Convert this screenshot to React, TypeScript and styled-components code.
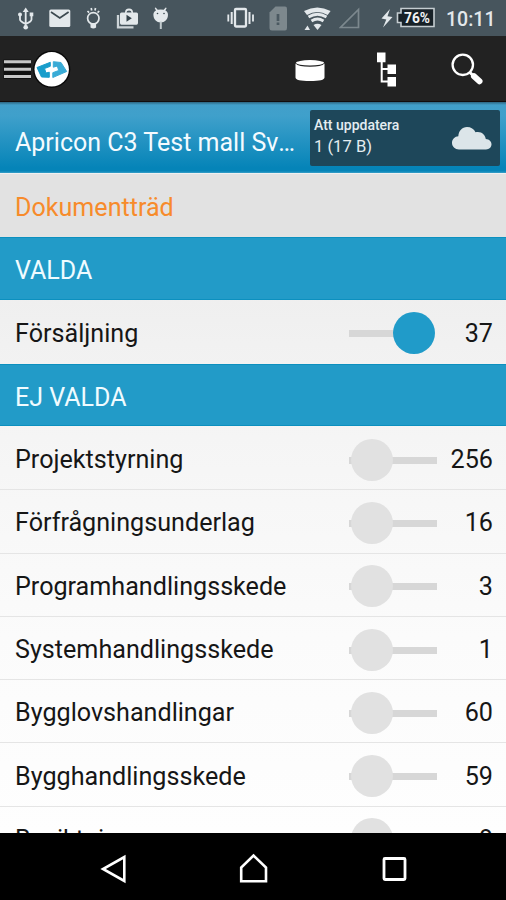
import React from "react";
import styled, { createGlobalStyle } from "styled-components";

const GlobalStyle = createGlobalStyle`
  html, body { margin: 0; padding: 0; background: #000; }
  * { box-sizing: border-box; }
  svg { display: block; flex: none; }
`;

const Screen = styled.div`
  width: 506px;
  height: 900px;
  overflow: hidden;
  display: flex;
  flex-direction: column;
  background: #000;
  font-family: Roboto, "Liberation Sans", sans-serif;
`;

const StatusBar = styled.header`
  height: 36px;
  flex: none;
  display: flex;
  background: #47555d;
`;

const StatusIcon = styled.svg<{ $gap: number }>`
  height: 36px;
  margin-left: ${(p) => p.$gap}px;
`;

const Clock = styled.time`
  margin-left: 10px;
  padding-top: 2px;
  font-size: 19.5px;
  font-weight: 500;
  line-height: 36px;
  color: #e3e8eb;
  white-space: nowrap;
`;

const Toolbar = styled.nav`
  height: 66px;
  flex: none;
  display: flex;
  background: #222;
  border-bottom: 1px solid #120d0e;
`;

const ToolButton = styled.button<{ $gap: number }>`
  margin: 0 0 0 ${(p) => p.$gap}px;
  padding: 0;
  border: 0;
  background: none;
`;

const TitleBar = styled.section`
  height: 71px;
  flex: none;
  display: flex;
  justify-content: space-between;
  padding: 8px 6px 7px 15px;
  background: linear-gradient(#2d6580 0, #429fca 3px, #3fa0cb 14px, #0584b8 66px, #0584b8 69px, #3a9fc8 71px);
`;

const Title = styled.h1`
  margin: 0;
  padding-top: 8px;
  width: 284px;
  font-size: 25px;
  font-weight: 400;
  line-height: 50px;
  color: #f4fbff;
  overflow: hidden;
  text-overflow: ellipsis;
  white-space: nowrap;
`;

const UpdateBox = styled.div`
  width: 190px;
  height: 56px;
  display: flex;
  justify-content: space-between;
  padding: 5px 8px 0 4px;
  border-radius: 2px;
  background: #1e475a;
  color: #e4edf1;
`;

const UpdateLabel = styled.div`
  font-size: 14px;
  font-weight: 500;
  line-height: 20px;
  white-space: nowrap;
`;

const UpdateSize = styled.div`
  font-size: 16.6px;
  line-height: 23px;
  white-space: nowrap;
`;

const TreeHeading = styled.h2`
  margin: 0;
  height: 64px;
  flex: none;
  padding: 3px 15px 0;
  border-top: 1px solid #f0f0f0;
  background: #e2e2e2;
  font-size: 25.1px;
  font-weight: 400;
  line-height: 61px;
  color: #f78b2b;
`;

const List = styled.main`
  height: 596px;
  flex: none;
  overflow: hidden;
  background: linear-gradient(#efefef 60px, #f5f5f5 200px, #fbfbfb 400px, #fefefe 596px);
`;

const GroupHeading = styled.h3`
  margin: 0;
  height: 62.5px;
  padding: 3px 15px 0;
  border-top: 1px solid #0c90bf;
  border-bottom: 1px solid #0c90bf;
  background: #229bc8;
  font-size: 25px;
  font-weight: 400;
  line-height: 59px;
  color: #f0fbff;
`;

const Row = styled.div<{ $divided?: boolean }>`
  height: ${(p) => (p.$divided ? 63.3 : 64)}px;
  display: grid;
  grid-template-columns: 334px 88px 1fr;
  align-items: center;
  padding: ${(p) => (p.$divided ? 4 : 3)}px 13px 0 15px;
  box-shadow: ${(p) => (p.$divided ? "0 1px 0 #e5e5e5" : "none")};
  font-size: 25.15px;
  line-height: 30px;
  color: #161616;
`;

const Label = styled.span`
  padding-top: 1px;
`;

const Count = styled(Label)`
  text-align: right;
`;

const Switch = styled.span<{ $on?: boolean }>`
  height: 42px;
  display: flex;
  align-items: center;
  justify-content: ${(p) => (p.$on ? "flex-end" : "flex-start")};
  padding: 0 ${(p) => (p.$on ? "2px" : "0")} 0 ${(p) => (p.$on ? "0" : "2px")};
  background: linear-gradient(#d7d7d7, #d7d7d7) left 18px / ${(p) => (p.$on ? 70 : 88)}px 7px no-repeat;
`;

const Knob = styled.span<{ $on?: boolean }>`
  width: 42px;
  height: 42px;
  border-radius: 50%;
  background: ${(p) => (p.$on ? "#209bc9" : "#e1e1e1")};
`;

const NavBar = styled.footer`
  height: 67px;
  flex: none;
  display: flex;
  background: #000;
`;

type Item = { name: string; count: number };

const available: Item[] = [
  { name: "Projektstyrning", count: 256 },
  { name: "Förfrågningsunderlag", count: 16 },
  { name: "Programhandlingsskede", count: 3 },
  { name: "Systemhandlingsskede", count: 1 },
  { name: "Bygglovshandlingar", count: 60 },
  { name: "Bygghandlingsskede", count: 59 },
  { name: "Besiktning", count: 8 },
];

function DocumentRow({ name, count, on }: Item & { on?: boolean }) {
  return (
    <Row $divided={!on}>
      <Label>{name}</Label>
      <Switch $on={on}>
        <Knob $on={on} />
      </Switch>
      <Count>{count}</Count>
    </Row>
  );
}

function Status() {
  const light = "#e3e8eb";
  return (
    <StatusBar>
      <StatusIcon $gap={17} width="18" viewBox="17 0 18 36" fill="none" stroke={light} strokeWidth="1.8">
        <path d="M25.7 11V27M20 15v4.5q0 2 5.700 4.500M31.500 15v4.500q0 2-5.800 4.500" />
        <path d="M25.700 7.500l3 4.500h-6z" fill={light} stroke="none" />
        <circle cx="25.700" cy="27.300" r="2.300" fill={light} stroke="none" />
        <circle cx="20" cy="14.500" r="2" fill={light} stroke="none" />
        <path d="M29.700 12.500h3.600v3.800h-3.600z" fill={light} stroke="none" />
      </StatusIcon>
      <StatusIcon $gap={14} width="22" viewBox="49 0 22 36">
        <rect x="49.300" y="9.500" width="21" height="17.500" rx="1.600" fill={light} />
        <path d="M51 12l8.800 6 8.800-6" fill="none" stroke="#3c4950" strokeWidth="1.700" />
      </StatusIcon>
      <StatusIcon $gap={14} width="17" viewBox="85 0 17 36" fill="none" stroke={light} strokeWidth="1.700">
        <circle cx="93.300" cy="18.300" r="5.700" />
        <path d="M87.500 11l1.600 1.700M99.200 11l-1.600 1.700M91.200 8l.5 2.500M95.500 8l-.5 2.500" />
        <path d="M90.500 23v4.500q2.800 2 5.600 0V23z" fill={light} stroke="none" />
      </StatusIcon>
      <StatusIcon $gap={14} width="23" viewBox="116 0 23 36">
        <path d="M118 15v12.400h15.500" fill="none" stroke="#cdd4d8" strokeWidth="2.300" />
        <path d="M121.500 12.500h3.500q0-4 4-4t4 4h3.500q1.500 0 1.500 1.500v9q0 1.700-1.500 1.700h-15q-1.500 0-1.500-1.700v-9q0-1.500 1.500-1.500zM126.500 12.500h5q0-2-2.500-2t-2.500 2z" fill={light} />
        <path d="M126.500 14.800v7l5.300-3.500z" fill="#35434b" />
      </StatusIcon>
      <StatusIcon $gap={13} width="18" viewBox="152 0 18 36">
        <path d="M153.500 16c-.6-3 .8-4.700 2.500-5.500L154.700 8l1-.5 2 2.300q3-.8 6 0l2-2.300 1 .5-1.300 2.500c1.700.8 3 2.500 2.500 5.500-.4 3.500-3 6.500-7.200 6.500s-6.800-3-7.200-6.500z" fill={light} />
        <path d="M159.800 21.500h2v7.500h-2z" fill="#c1cace" />
        <circle cx="157.500" cy="13.500" r=".8" fill="#3b4950" />
        <circle cx="164" cy="13.500" r=".8" fill="#3b4950" />
      </StatusIcon>
      <StatusIcon $gap={56} width="29" viewBox="226 0 29 36" fill="none" stroke={light}>
        <rect x="235" y="9" width="11" height="17.500" rx="1" strokeWidth="2.300" />
        <path d="M231.700 12v12M249.500 12v12" strokeWidth="2" />
        <path d="M228.300 14.500v7M253 14.500v7" strokeWidth="1.800" />
      </StatusIcon>
      <StatusIcon $gap={14} width="19" viewBox="269 0 19 36">
        <path d="M275.500 6.500H285q2 0 2 2V28q0 2.500-2 2.500h-13q-2.500 0-2.500-2.500V12.500z" fill="#7d888d" />
        <path d="M278 14v7M278 22.500V25" stroke="#4b5961" strokeWidth="2.700" />
      </StatusIcon>
      <StatusIcon $gap={15} width="29" viewBox="303 0 29 36" fill="none" stroke={light}>
        <path d="M304 11q13.300-7 26.600 0l-3 4q-10.300-6-20.600 0z" fill={light} stroke="none" />
        <path d="M308.500 17q9-5.500 18 0M311.500 21q6-4 12 0" strokeWidth="2.800" />
        <path d="M313.500 25q4-2.500 8 0l-4 5z" fill={light} stroke="none" />
        <path d="M304.500 30l3-4.500 2.500 4.500z" fill={light} stroke="none" />
      </StatusIcon>
      <StatusIcon $gap={7} width="21" viewBox="339 0 21 36">
        <path d="M358.500 9.500V27.500H340.500z" fill="none" stroke="#7c888e" strokeWidth="1.700" />
      </StatusIcon>
      <StatusIcon $gap={21} width="55" viewBox="381 0 55 36">
        <path d="M390 9l-8.500 9.500 4.800 1L383 27.500l9.500-10.500-5-.8z" fill={light} />
        <path d="M401 8.500H434V26.500H401V22.500H397.500V13H401z" fill="#172127" stroke="#c5cdd1" strokeWidth="1.600" />
        <text x="404" y="23" textLength="26" lengthAdjust="spacingAndGlyphs" fontFamily="Roboto, sans-serif" fontWeight="700" fontSize="14.500" fill="#f1f4f5">76%</text>
      </StatusIcon>
      <Clock>10:11</Clock>
    </StatusBar>
  );
}

function Tools() {
  return (
    <Toolbar>
      <ToolButton $gap={3} aria-label="Meny">
        <svg width="69" height="65" viewBox="3 36 69 65">
          <path d="M3.500 59.500H31V79H3.500z" fill="#101010" />
          <path d="M4 61.700H31M4 69.200H31M4 76.500H31" stroke="#c6c6c6" strokeWidth="3" />
          <circle cx="51.700" cy="69.300" r="18.600" fill="#090909" />
          <circle cx="51.700" cy="69.300" r="17.200" fill="#fff" />
          <path d="M37 67.500L50.300 62.300V66.300L44.500 68.500 46 73 49.300 72.200V77.300L41.500 77z" fill="#189dcb" stroke="#189dcb" strokeWidth="1" strokeLinejoin="round" />
          <path d="M66.700 71.500L52.800 77.500V72.700L58.700 70.500 57.300 66 53.300 67.200V61.700L61 62.500z" fill="#39abd6" stroke="#39abd6" strokeWidth="1" strokeLinejoin="round" />
        </svg>
      </ToolButton>
      <ToolButton $gap={222} aria-label="Databas">
        <svg width="32" height="65" viewBox="294 36 32 65" fill="#fff">
          <path d="M295.500 63.500v14q0 3.500 14.500 3.500t14.500-3.500V63.500q-3 3.200-14.500 3.200T295.500 63.500z" />
          <ellipse cx="310" cy="62.800" rx="14" ry="2.700" />
        </svg>
      </ToolButton>
      <ToolButton $gap={48} aria-label="Trädvy">
        <svg width="26" height="65" viewBox="374 36 26 65" fill="#fff">
          <path d="M377 52.500h8.500V62.300H377zM387.500 64.500h8.500V74h-8.500zM387.500 77h8.500v9.500h-8.500z" />
          <path d="M381.700 62V81.500H388M381.700 69H388" fill="none" stroke="#fff" strokeWidth="2" />
        </svg>
      </ToolButton>
      <ToolButton $gap={50} aria-label="Sök">
        <svg width="36" height="65" viewBox="450 36 36 65" fill="none" stroke="#fff">
          <circle cx="462.800" cy="64.800" r="10.200" strokeWidth="2.300" />
          <path d="M470 72.500l3 3" strokeWidth="3" />
          <path d="M474 76.300l5.500 5" strokeWidth="6" strokeLinecap="round" />
        </svg>
      </ToolButton>
    </Toolbar>
  );
}

export default function App() {
  return (
    <Screen>
      <GlobalStyle />
      <Status />
      <Tools />
      <TitleBar>
        <Title>Apricon C3 Test mall Svenska</Title>
        <UpdateBox>
          <div>
            <UpdateLabel>Att uppdatera</UpdateLabel>
            <UpdateSize>1 (17 B)</UpdateSize>
          </div>
          <svg width="40" height="46" viewBox="452 115 40 46">
            <path d="M459 149.500c-4 0-7-3-7-6.500 0-4 3-6.500 6.300-6.700.3-5.300 3.800-9.300 8.700-9.300 4 0 7 2 8.500 5.200 6-1.300 9.800 2.500 10.300 6.800 3.500.3 5.700 2.500 5.700 5.300s-2.300 5.200-5.500 5.200z" fill="#dce5e9" />
          </svg>
        </UpdateBox>
      </TitleBar>
      <TreeHeading>Dokumentträd</TreeHeading>
      <List>
        <GroupHeading>VALDA</GroupHeading>
        <DocumentRow name="Försäljning" count={37} on />
        <GroupHeading>EJ VALDA</GroupHeading>
        {available.map((item) => (
          <DocumentRow key={item.name} {...item} />
        ))}
      </List>
      <NavBar>
        <ToolButton $gap={100} aria-label="Bakåt">
          <svg width="28" height="67" viewBox="100 833 28 67">
            <path d="M124.300 857V881L103 869z" fill="none" stroke="#fff" strokeWidth="2.600" />
          </svg>
        </ToolButton>
        <ToolButton $gap={110} aria-label="Hem">
          <svg width="32" height="67" viewBox="238 833 32 67">
            <path d="M241.200 881.200V867.500L253.500 855.500 266 867.500V881.200z" fill="none" stroke="#fff" strokeWidth="2.600" />
          </svg>
        </ToolButton>
        <ToolButton $gap={110} aria-label="Översikt">
          <svg width="30" height="67" viewBox="380 833 30 67">
            <rect x="384" y="858.500" width="21" height="21" rx="1" fill="none" stroke="#fff" strokeWidth="2.800" />
          </svg>
        </ToolButton>
      </NavBar>
    </Screen>
  );
}
